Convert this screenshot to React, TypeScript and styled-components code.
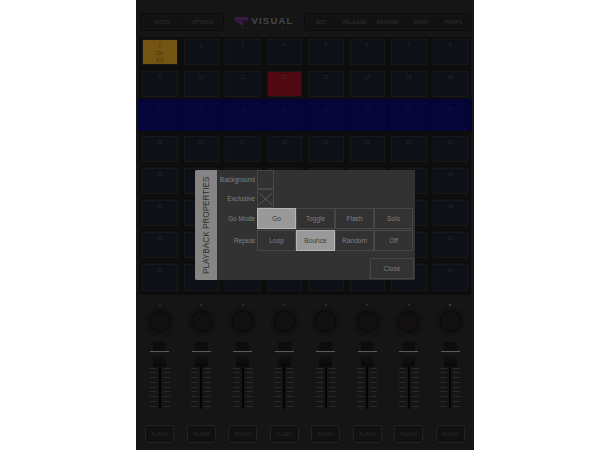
import { createGlobalStyle } from 'styled-components'
import styled from 'styled-components'

const GlobalStyle = createGlobalStyle`
  html, body { margin: 0; padding: 0; background: #fff; }
  body { font-family: "Liberation Sans", Arial, sans-serif; }
`

const cellNotes: Record<number, string> = { 1: 'gold', 12: 'red' }
const cells = Array.from({ length: 64 }, (_, i) => i + 1)
const faders = Array.from({ length: 8 }, (_, i) => i)
const ticks = Array.from({ length: 9 }, (_, i) => i)

export default function App() {
  return (
    <>
      <GlobalStyle />
      <Page>
        <Console>
          <TopBar>
            <LeftGroup>
              <TopButton>PATCH</TopButton>
              <TopButton>OPTIONS</TopButton>
            </LeftGroup>
            <Logo>
              <LogoRow>
                <svg width="15" height="8" viewBox="0 0 15 9">
                  <path d="M0 0h15v4H8l2 5H7L0 4z" fill="#3c1845" />
                </svg>
                <LogoWord>VISUAL</LogoWord>
              </LogoRow>
              <LogoSub>PRODUCTIONS</LogoSub>
            </Logo>
            <ButtonGroup>
              <TopButton>EDIT</TopButton>
              <TopButton>RELEASE</TopButton>
              <TopButton>RENAME</TopButton>
              <TopButton>SWAP</TopButton>
              <TopButton>PROPS</TopButton>
            </ButtonGroup>
          </TopBar>
          <Grid>
            <BlueBand />
            {cells.map((n) => (
              <Cell key={n} $kind={cellNotes[n] ?? (n >= 17 && n <= 24 ? 'blue' : 'plain')}>
                <span>{n}</span>
                {n === 1 && <span>On</span>}
                <small>{n === 1 ? '8.5' : '–'}</small>
              </Cell>
            ))}
          </Grid>
          <FaderBank>
            {faders.map((i) => (
              <Strip key={i}>
                <Led $on={i === 7} />
                <Knob />
                <FaderTrack>
                  <Ticks>
                    {ticks.map((t) => <Tick key={t} />)}
                  </Ticks>
                  <Slot />
                  <Ticks>
                    {ticks.map((t) => <Tick key={t} />)}
                  </Ticks>
                  <Cap />
                </FaderTrack>
                <FlashButton>FLASH</FlashButton>
              </Strip>
            ))}
          </FaderBank>
        </Console>
        <Dialog>
          <DialogTitle>PLAYBACK PROPERTIES</DialogTitle>
          <DialogBody>
            <Row>
              <RowLabel>Background</RowLabel>
              <CheckBox />
            </Row>
            <Row>
              <RowLabel>Exclusive</RowLabel>
              <CheckBox>
                <svg width="20" height="20" viewBox="0 0 20 20">
                  <path d="M1 2l18 16M19 2L1 18" stroke="#666" strokeWidth="1" fill="none" />
                </svg>
              </CheckBox>
            </Row>
            <OptionRow>
              <RowLabel>Go Mode</RowLabel>
              <Options>
                <Option $active>Go</Option>
                <Option>Toggle</Option>
                <Option>Flash</Option>
                <Option>Solo</Option>
              </Options>
            </OptionRow>
            <OptionRow>
              <RowLabel>Repeat</RowLabel>
              <Options>
                <Option>Loop</Option>
                <Option $active>Bounce</Option>
                <Option>Random</Option>
                <Option>Off</Option>
              </Options>
            </OptionRow>
            <Footer>
              <CloseButton>Close</CloseButton>
            </Footer>
          </DialogBody>
        </Dialog>
      </Page>
    </>
  )
}

const Page = styled.div`
  position: relative;
  width: 610px;
  height: 450px;
  background: #fff;
  overflow: hidden;
`

const Console = styled.div`
  width: 338px;
  height: 450px;
  margin-left: 136px;
  background: #151515;
  display: flex;
  flex-direction: column;
  box-sizing: border-box;
  padding-top: 13px;
`

const TopBar = styled.div`
  display: flex;
  justify-content: space-between;
  align-items: center;
  height: 18px;
  padding: 0 3px 0 4px;
  flex-shrink: 0;
`

const ButtonGroup = styled.div`
  display: flex;
  height: 18px;
  border: 1px solid #0b0b0b;
  border-radius: 3px;
  background: #121212;
  box-sizing: border-box;

  & > div {
    width: 33px;
  }
`

const LeftGroup = styled(ButtonGroup)`
  & > div {
    width: 41px;
  }
`

const TopButton = styled.div`
  display: flex;
  align-items: center;
  justify-content: center;
  font-size: 5px;
  color: #303030;
`

const Logo = styled.div`
  display: flex;
  flex-direction: column;
  align-items: center;
  padding-top: 2px;
`

const LogoRow = styled.div`
  display: flex;
  align-items: center;
  gap: 2px;
`

const LogoWord = styled.div`
  font-size: 9.5px;
  font-weight: 700;
  letter-spacing: 1.2px;
  color: #464646;
  line-height: 10px;
`

const LogoSub = styled.div`
  font-size: 3px;
  letter-spacing: 3px;
  color: #2e2430;
  line-height: 5px;
`

const Grid = styled.div`
  position: relative;
  margin: 6px 3px 0;
  display: grid;
  grid-template-columns: repeat(8, 1fr);
  grid-auto-rows: 32.2px;
  flex-shrink: 0;
  background: #0d0d0d;
`

const BlueBand = styled.div`
  position: absolute;
  left: -1px;
  right: -1px;
  top: 62px;
  height: 32px;
  background: #040436;
`

const cellBackground = (kind: string) => {
  if (kind === 'gold') return '#745412'
  if (kind === 'red') return '#500912'
  if (kind === 'blue') return '#050539'
  return '#0d1016'
}

const Cell = styled.div<{ $kind: string }>`
  position: relative;
  margin: 2px 3px 4px;
  background: ${(p) => cellBackground(p.$kind)};
  border: 1px solid ${(p) => (p.$kind === 'blue' ? '#07073f' : '#16181c')};
  display: flex;
  flex-direction: column;
  align-items: center;
  justify-content: space-between;
  font-size: 5px;
  line-height: 6px;
  color: ${(p) => (p.$kind === 'plain' ? '#272a2e' : p.$kind === 'blue' ? '#14144c' : '#41331a')};
  padding: 2px 0 1px;
  box-sizing: border-box;

  small {
    font-size: 5px;
  }
`

const FaderBank = styled.div`
  display: grid;
  grid-template-columns: repeat(8, 1fr);
  padding: 0 3px;
  margin-top: 9px;
`

const Strip = styled.div`
  display: flex;
  flex-direction: column;
  align-items: center;
`

const Led = styled.div<{ $on: boolean }>`
  width: 2px;
  height: 2px;
  border-radius: 50%;
  background: ${(p) => (p.$on ? '#2a5a4a' : '#2c3036')};
`

const Knob = styled.div`
  width: 25px;
  height: 25px;
  margin-top: 3px;
  border-radius: 50%;
  background: radial-gradient(circle at 50% 50%, #131010 0 8px, #0c0b0b 10.5px, #161616 12.5px);
  box-shadow: 0 0 3px #0a0a0a;
`

const FaderTrack = styled.div`
  position: relative;
  display: flex;
  justify-content: center;
  gap: 2px;
  height: 43px;
  margin-top: 32px;
`

const Ticks = styled.div`
  display: flex;
  flex-direction: column;
  justify-content: space-between;
  width: 7px;
  height: 39px;
  padding-top: 2px;
`

const Tick = styled.div`
  height: 1px;
  background: #292929;
`

const Slot = styled.div`
  width: 2px;
  height: 43px;
  background: #040404;
`

/* fader cap sits on top of the slot, its line is wider than the body */
const Cap = styled.div`
  position: absolute;
  left: 50%;
  top: -24px;
  width: 13px;
  height: 25px;
  margin-left: -6.5px;
  background: linear-gradient(#0c0c0c, #0e0e0e 36%, #181818 44%, #0e0e0e 70%, #0a0a0a);

  &::after {
    content: '';
    position: absolute;
    left: -3px;
    right: -3px;
    top: 9px;
    height: 1px;
    background: #5a5a5a;
  }
`

const FlashButton = styled.div`
  width: 29px;
  height: 18px;
  margin-top: 16px;
  border: 1px solid #232323;
  border-radius: 2px;
  background: #111;
  box-sizing: border-box;
  display: flex;
  align-items: center;
  justify-content: center;
  font-size: 5px;
  color: #2c2c2c;
`

const Dialog = styled.div`
  position: absolute;
  left: 195px;
  top: 170px;
  width: 220px;
  height: 110px;
  display: flex;
  background: #323232;
`

const DialogTitle = styled.div`
  width: 22px;
  background: #858585;
  border-radius: 0 2px 2px 0;
  writing-mode: vertical-rl;
  transform: rotate(180deg);
  display: flex;
  align-items: center;
  justify-content: center;
  font-size: 8.2px;
  color: #2e2e2e;
  white-space: nowrap;
`

const DialogBody = styled.div`
  flex: 1;
  display: flex;
  flex-direction: column;
`

const Row = styled.div`
  display: flex;
  align-items: center;
  height: 19px;
`

const OptionRow = styled(Row)`
  height: 21px;
  margin-bottom: 1px;
`

const RowLabel = styled.div`
  width: 38px;
  margin-right: 2px;
  text-align: right;
  font-size: 6.6px;
  color: #808080;
  white-space: nowrap;
`

const CheckBox = styled.div`
  width: 17px;
  height: 19px;
  border: 1px solid #474747;
  box-sizing: border-box;
  display: flex;
  align-items: center;
  justify-content: center;
  overflow: hidden;
`

const Options = styled.div`
  display: grid;
  grid-template-columns: repeat(4, 39px);
  height: 21px;
`

const Option = styled.div<{ $active?: boolean }>`
  border: 1px solid ${(p) => (p.$active ? '#b5b5b5' : '#474747')};
  background: ${(p) => (p.$active ? '#999' : 'transparent')};
  color: ${(p) => (p.$active ? '#3a3a3a' : '#808080')};
  box-sizing: border-box;
  display: flex;
  align-items: center;
  justify-content: center;
  font-size: 6.6px;
`

const Footer = styled.div`
  display: flex;
  justify-content: flex-end;
  margin-top: 6px;
  padding-right: 1px;
`

const CloseButton = styled.div`
  width: 44px;
  height: 21px;
  border: 1px solid #474747;
  box-sizing: border-box;
  display: flex;
  align-items: center;
  justify-content: center;
  font-size: 6.6px;
  color: #808080;
`
